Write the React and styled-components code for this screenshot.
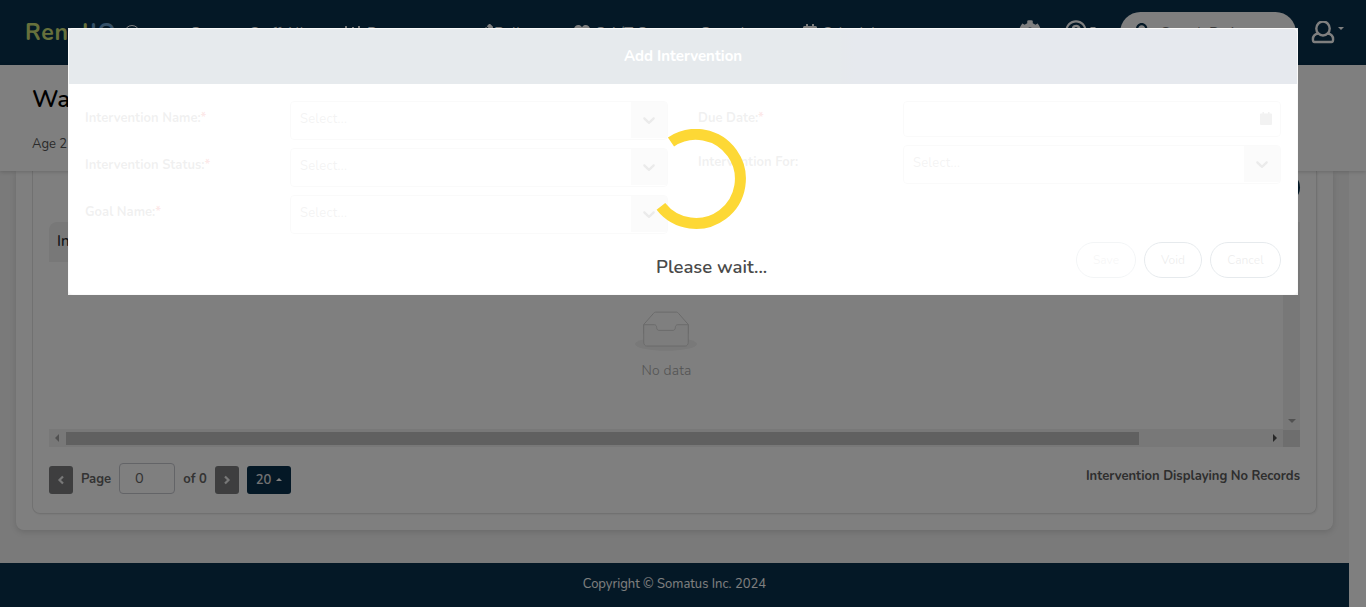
import React from "react";
import styled, { createGlobalStyle } from "styled-components";
import {
  FaCog,
  FaRegQuestionCircle,
  FaSearch,
  FaRegCalendarAlt,
  FaHeart,
  FaChartBar,
  FaPen,
} from "react-icons/fa";

const Global = createGlobalStyle`
  * { box-sizing: border-box; }
  body {
    margin: 0;
    overflow: hidden;
    font-family: Nunito, "Open Sans", sans-serif;
    font-size: 13px;
    color: #212529;
  }
`;

const Page = styled.div`
  position: relative;
  width: 1366px;
  height: 607px;
  overflow: hidden;
  display: flex;
  flex-direction: column;
  background: #fff;
`;

const NavBar = styled.header`
  flex: none;
  height: 65px;
  display: flex;
  align-items: center;
  padding-left: 25px;
  background: #08304c;
  color: #fff;
`;

const Logo = styled.div`
  width: 99px;
  font-size: 23px;
  font-weight: 700;
  letter-spacing: 0.8px;
  color: #cfe078;
  span { color: #6ba0d0; }
`;

const Ring = styled.div`
  width: 16px;
  height: 16px;
  margin-right: 50px;
  border: 1.5px solid #fff;
  border-radius: 50%;
`;

const NavItem = styled.div`
  flex: none;
  width: ${(p) => p.$w}px;
  margin-bottom: 2px;
  display: flex;
  align-items: center;
  gap: ${(p) => p.$gap || 5}px;
  font-size: 14.5px;
  line-height: 18px;
  white-space: nowrap;
  svg { font-size: 16px; flex: none; }
`;

const Tool = styled.div`
  flex: none;
  width: ${(p) => p.$w}px;
  margin-bottom: ${(p) => (p.$lift ? 4 : 0)}px;
  display: flex;
  align-items: center;
  gap: 3px;
  font-size: ${(p) => p.$size}px;
`;

const Caret = styled.i`
  width: 0;
  height: 0;
  margin-top: ${(p) => p.$top || 0}px;
  border: 3px solid transparent;
  border-top: ${(p) => (p.$up ? "0" : "3px solid #fff")};
  border-bottom: ${(p) => (p.$up ? "3px solid #fff" : "0")};
`;

const SearchBox = styled.div`
  flex: none;
  width: 176px;
  height: 41px;
  margin-right: 15px;
  padding: 0 0 2px 16px;
  display: flex;
  align-items: center;
  gap: 11px;
  border-radius: 21px;
  background: #fff;
  color: #777;
  font-size: 14.5px;
  svg { color: #08304c; font-size: 14px; margin-bottom: 3px; }
`;

const PatientBar = styled.section`
  position: relative;
  z-index: 1;
  flex: none;
  height: 106px;
  padding: 17px 32px;
  background: #fff;
  box-shadow: 0 1px 4px rgba(0, 0, 0, 0.18);
`;

const PatientName = styled.h1`
  margin: 0 0 18px;
  font-size: 24px;
  line-height: 35px;
  font-weight: 600;
  color: #000;
`;

const PatientMeta = styled.div`
  line-height: 18px;
  color: #555;
`;

const Content = styled.main`
  flex: 1;
  width: 1349px;
  display: flex;
  flex-direction: column;
  background: #f4f4f4;
`;

const Card = styled.div`
  height: 359px;
  margin: 0 16px;
  padding: 0 16px 16px;
  background: #fff;
  border-radius: 0 0 8px 8px;
  box-shadow: 0 2px 6px rgba(0, 0, 0, 0.13);
`;

const Panel = styled.div`
  height: 343px;
  padding: 0 16px;
  border: 1px solid #e2e2e2;
  border-top: 0;
  border-radius: 0 0 8px 8px;
  box-shadow: 1px 1px 2px rgba(0, 0, 0, 0.06);
`;

const PanelTools = styled.div`
  height: 51px;
  padding-top: 1px;
  display: flex;
  justify-content: flex-end;
`;

const AddButton = styled.button`
  width: 90px;
  height: 31px;
  border: 0;
  border-radius: 16px;
  background: #08304c;
`;

const Table = styled.div`
  display: flex;
  height: 207px;
`;

const TableBody = styled.div`
  flex: 1;
  display: flex;
  flex-direction: column;
  align-items: center;
`;

const HeadRow = styled.div`
  align-self: stretch;
  height: 40px;
  padding: 0 8px;
  margin-bottom: 49px;
  border-radius: 8px 0 0 0;
  background: #f0f0f0;
  font-size: 15px;
  font-weight: 500;
  line-height: 38px;
`;

const NoData = styled.div`
  margin-top: 9px;
  line-height: 22px;
  font-size: 14px;
  font-weight: 300;
  letter-spacing: 0.2px;
  padding-left: 1px;
  color: #a8a8a8;
`;

const VScroll = styled.div`
  width: 17px;
  display: flex;
  align-items: flex-end;
  justify-content: center;
  padding-bottom: 6px;
  background: #f1f1f1;
`;

const Arrow = styled.i`
  width: 0;
  height: 0;
  border: 4px solid transparent;
  ${(p) => p.$dir === "down" && "border-top-color:#a3a3a3;border-bottom:0;"}
  ${(p) => p.$dir === "left" && "border-right-color:#a3a3a3;border-left:0;"}
  ${(p) => p.$dir === "right" && "border-left-color:#505050;border-right:0;"}
`;

const HScroll = styled.div`
  height: 18px;
  padding-left: 6px;
  display: flex;
  align-items: center;
  background: #f1f1f1;
`;

const Thumb = styled.div`
  width: 1073px;
  height: 13px;
  margin: 0 134px 0 7px;
  background: #c1c1c1;
`;

const Corner = styled.div`
  width: 17px;
  height: 17px;
  margin: 1px 0 0 auto;
  background: #dcdcdc;
`;

const Pager = styled.div`
  margin-top: 16px;
  display: flex;
  align-items: flex-end;
  height: 31px;
  font-weight: 700;
  color: #666;
`;

const PageButton = styled.button`
  width: ${(p) => p.$w || 24}px;
  height: 28px;
  padding: 0;
  display: flex;
  align-items: center;
  justify-content: center;
  gap: 5px;
  border: 0;
  border-radius: 3px;
  background: ${(p) => (p.$w ? "#08304c" : "#7c7d7f")};
  color: #e6e6e6;
  font-family: inherit;
  font-size: 13px;
  font-weight: 600;
`;

const PagerText = styled.span`
  align-self: center;
  width: ${(p) => p.$w}px;
  text-align: center;
`;

const PageInput = styled.div`
  width: 56px;
  height: 31px;
  padding-left: 15px;
  border: 1px solid #c6c8ce;
  border-radius: 4px;
  font-size: 14.5px;
  font-weight: 400;
  line-height: 29px;
`;

const Summary = styled.div`
  margin: 0 0 7px auto;
  line-height: 22px;
  white-space: nowrap;
  color: #5c5c5c;
`;

const Footer = styled.footer`
  height: 44px;
  margin-top: auto;
  background: #08304c;
  color: #fff;
  text-align: center;
  line-height: 42px;
`;

const Backdrop = styled.div`
  position: absolute;
  inset: 0;
  z-index: 2;
  display: flex;
  justify-content: center;
  align-items: flex-start;
  padding-top: 28px;
  background: rgba(0, 0, 0, 0.5);
`;

const Modal = styled.div`
  position: relative;
  width: 1230px;
  height: 267px;
  border: 1px solid rgba(0, 0, 0, 0.2);
  border-radius: 5px;
  background: #fff;
`;

const ModalTitle = styled.h2`
  margin: 0;
  height: 55px;
  border-radius: 4px 4px 0 0;
  background: linear-gradient(90deg, #08304c 0 61%, #03224f 64%);
  color: #fff;
  font-size: 15px;
  font-weight: 700;
  line-height: 54px;
  text-align: center;
`;

const Form = styled.div`
  display: flex;
  gap: 30px;
  height: 141px;
  padding: 0 16px;
  margin-top: 17px;
`;

const FormColumn = styled.div`
  flex: 1;
  display: flex;
  flex-direction: column;
  gap: 8px;
`;

const Row = styled.div`
  display: flex;
  height: ${(p) => p.$h || 39}px;
`;

const Label = styled.label`
  width: 205px;
  padding-top: 8px;
  line-height: 18px;
  font-weight: 700;
  color: #6a6a6a;
  span { color: #e02020; }
`;

const Field = styled.div`
  flex: 1;
  display: flex;
  justify-content: space-between;
  align-items: center;
  padding-left: 9px;
  border: 1px solid #ccc;
  border-radius: 4px;
  color: #888;
  span { margin-top: -3px; letter-spacing: 0.2px; }
`;

const Indicator = styled.div`
  align-self: stretch;
  width: 36px;
  margin-bottom: 1px;
  display: flex;
  align-items: center;
  justify-content: center;
  background: #d4d4d4;
`;

const DateIcon = styled.svg`
  margin-right: 8px;
`;

const Actions = styled.div`
  display: flex;
  justify-content: flex-end;
  gap: 8px;
  padding-right: 16px;
`;

const Action = styled.button`
  width: ${(p) => p.$w}px;
  height: 36px;
  padding: 0;
  border: 1px solid #08304c;
  border-radius: 18px;
  background: #fff;
  color: #555;
  font-family: inherit;
  font-size: 12px;
  opacity: ${(p) => (p.disabled ? 0.5 : 1)};
`;

const Loader = styled.div`
  position: absolute;
  inset: -1px;
  padding: 101px 0 0 578px;
  background: rgba(255, 255, 255, 0.9);
`;

const Spinner = styled.svg`
  display: block;
`;

const Wait = styled.div`
  margin: 25px 0 0 10px;
  font-size: 18.5px;
  font-weight: 600;
  line-height: 26px;
  color: #4a4a4a;
`;

const Chevron = () => (
  <svg width="20" height="20" viewBox="0 0 20 20" fill="#333">
    <path d="M4.516 7.548c0.436-0.446 1.043-0.481 1.576 0l3.908 3.747 3.908-3.747c0.533-0.481 1.141-0.446 1.574 0 0.436 0.445 0.408 1.197 0 1.615-0.406 0.418-4.695 4.502-4.695 4.502-0.217 0.223-0.502 0.335-0.787 0.335s-0.57-0.112-0.789-0.335c0 0-4.287-4.084-4.695-4.502s-0.436-1.17 0-1.615z" />
  </svg>
);

const Step = ({ d }) => (
  <svg width="8" height="10" viewBox="0 0 8 10" fill="none" stroke="#f0f0f0" strokeWidth="2.2">
    <path d={d} />
  </svg>
);

const SelectRow = ({ label, required }) => (
  <Row>
    <Label>{label}{required && <span>*</span>}</Label>
    <Field>
      <span>Select...</span>
      <Indicator><Chevron /></Indicator>
    </Field>
  </Row>
);

const EmptyBox = () => (
  <svg width="62" height="40" viewBox="0 0 64 41">
    <g transform="translate(0 1)" fill="none">
      <ellipse cx="32" cy="33" rx="32" ry="7" fill="#f2f2f2" />
      <g stroke="#d4d4d4">
        <path d="M55 12.76L44.854 1.258C44.367.474 43.656 0 42.907 0H21.093c-.749 0-1.46.474-1.947 1.257L9 12.761V22h46v-9.24z" />
        <path d="M41.613 15.931c0-1.605.994-2.93 2.227-2.931H55v18.137C55 33.26 53.68 35 52.05 35h-40.1C10.32 35 9 33.259 9 31.137V13h11.16c1.233 0 2.227 1.323 2.227 2.928v.022c0 1.605 1.005 2.901 2.237 2.901h14.752c1.232 0 2.237-1.308 2.237-2.913v-.007z" fill="#fafafa" />
      </g>
    </g>
  </svg>
);

export default function App() {
  return (
    <Page>
      <Global />
      <NavBar>
        <Logo>Renal<span>IQ</span></Logo>
        <Ring />
        <NavItem $w={60}>Cases</NavItem>
        <NavItem $w={95}>Staff All</NavItem>
        <NavItem $w={132} $gap={6}><FaChartBar />Reports</NavItem>
        <NavItem $w={97} $gap={1}><FaPen />Bulk</NavItem>
        <NavItem $w={126}><FaHeart />C A/T Connect</NavItem>
        <NavItem $w={102}>Consults</NavItem>
        <NavItem $w={217}><FaRegCalendarAlt />Scheduler</NavItem>
        <Tool $w={46} $size={22} $lift><FaCog /></Tool>
        <Tool $w={55} $size={22} $lift><FaRegQuestionCircle /><Caret $top={-5} /></Tool>
        <SearchBox><FaSearch />Search Patient</SearchBox>
        <Tool $w={40} $size={0}>
          <svg width="24" height="24" viewBox="0 0 24 24" fill="none" stroke="#fff" strokeWidth="2.4">
            <ellipse cx="12" cy="7.500" rx="6.700" ry="7" />
            <path d="M7 12.500C3.700 13.200 1.900 15.300 1.900 18.300c0 1.900.4 2.700 1.600 2.700h17c1.200 0 1.600-.8 1.600-2.700 0-3-1.800-5.100-5.100-5.800" />
          </svg>
          <Caret $top={-8} />
        </Tool>
      </NavBar>
      <PatientBar>
        <PatientName>Wa</PatientName>
        <PatientMeta>Age 2</PatientMeta>
      </PatientBar>
      <Content>
        <Card>
          <Panel>
            <PanelTools><AddButton /></PanelTools>
            <Table>
              <TableBody>
                <HeadRow>Intervention</HeadRow>
                <EmptyBox />
                <NoData>No data</NoData>
              </TableBody>
              <VScroll><Arrow $dir="down" /></VScroll>
            </Table>
            <HScroll>
              <Arrow $dir="left" />
              <Thumb />
              <Arrow $dir="right" />
              <Corner />
            </HScroll>
            <Pager>
              <PageButton><Step d="M6 1.500L2.500 5L6 8.500" /></PageButton>
              <PagerText $w={46}>Page</PagerText>
              <PageInput>0</PageInput>
              <PagerText $w={40}>of 0</PagerText>
              <PageButton><Step d="M2 1.500L5.500 5L2 8.500" /></PageButton>
              <PagerText $w={8} />
              <PageButton $w={44}>20<Caret $up $top={-2} /></PageButton>
              <Summary>Intervention Displaying No Records</Summary>
            </Pager>
          </Panel>
        </Card>
        <Footer>Copyright © Somatus Inc. 2024</Footer>
      </Content>
      <Backdrop>
        <Modal>
          <ModalTitle>Add Intervention</ModalTitle>
          <Form>
            <FormColumn>
              <SelectRow label="Intervention Name:" required />
              <SelectRow label="Intervention Status:" required />
              <SelectRow label="Goal Name:" required />
            </FormColumn>
            <FormColumn>
              <Row $h={36}>
                <Label>Due Date:<span>*</span></Label>
                <Field>
                  <span />
                  <DateIcon width="12" height="14" viewBox="0 0 12 14" fill="#777">
                    <path d="M2.500 0h1.500v1.500h4V0h1.500v1.500H11a1 1 0 0 1 1 1V12a1 1 0 0 1-1 1H1a1 1 0 0 1-1-1V2.500a1 1 0 0 1 1-1h1.500z" />
                  </DateIcon>
                </Field>
              </Row>
              <SelectRow label="Intervention For:" />
            </FormColumn>
          </Form>
          <Actions>
            <Action $w={60} disabled>Save</Action>
            <Action $w={58}>Void</Action>
            <Action $w={71}>Cancel</Action>
          </Actions>
          <Loader>
            <Spinner width="100" height="100" viewBox="0 0 100 100" fill="none">
              <path d="M25 13A44.500 44.500 0 1 1 14.900 77.400" stroke="#fdd835" strokeWidth="11" />
            </Spinner>
            <Wait>Please wait...</Wait>
          </Loader>
        </Modal>
      </Backdrop>
    </Page>
  );
}
